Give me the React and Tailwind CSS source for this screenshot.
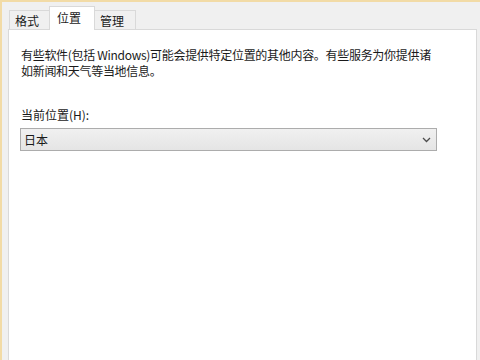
import React from 'react';

const Tab = function ({ label, selected, width }) {
  if (selected) {
    return (
      <div
        className={`relative z-10 -mb-px -ml-px h-[24px] border border-b-0 border-[#d9d9d9] bg-white pl-[7px] pt-[3px] leading-[16px] ${width}`}
      >
        {label}
      </div>
    );
  }
  return (
    <div
      className={`-ml-px h-[19px] border border-b-0 border-[#d9d9d9] bg-[#f0f0f0] pl-[5px] pt-[2px] leading-[16px] ${width}`}
    >
      {label}
    </div>
  );
};

const App = function () {
  return (
    <div className="h-[360px] w-[480px] overflow-hidden border-l-2 border-t-2 border-[#f2dba6] bg-[#f0f0f0] font-['Noto_Sans_CJK_SC','Noto_Sans',sans-serif] text-[12px] text-[#1a1a1a]">
      {/* Tabs */}
      <div className="flex h-[27px] items-end pl-[8px]">
        <Tab label="格式" width="w-[41px]" />
        <Tab label="位置" width="w-[46px]" selected />
        <Tab label="管理" width="w-[42px]" />
      </div>

      {/* Panel */}
      <div className="ml-[6px] h-[400px] w-[469px] border border-[#d9d9d9] bg-white pl-[12px] pt-[17px]">
        <p className="whitespace-nowrap leading-[16px] tracking-[-0.3px]">
          有些软件(包括 Windows)可能会提供特定位置的其他内容。有些服务为你提供诸
          <br />
          如新闻和天气等当地信息。
        </p>

        <div className="mt-[28px] leading-[16px]">当前位置(H):</div>

        <div className="-ml-px mt-[5px] flex h-[23px] w-[417px] items-center justify-between border border-[#acacac] bg-gradient-to-b from-[#f0f0f0] to-[#e5e5e5] pl-[3px] pr-[4px]">
          <span className="leading-[16px]">日本</span>
          <svg width="9" height="6" viewBox="0 0 9 6" className="mr-[1px]">
            <path d="M1 1 L4.5 4.5 L8 1" fill="none" stroke="#4d4d4d" strokeWidth="1.3" />
          </svg>
        </div>
      </div>
    </div>
  );
};

export default App;
